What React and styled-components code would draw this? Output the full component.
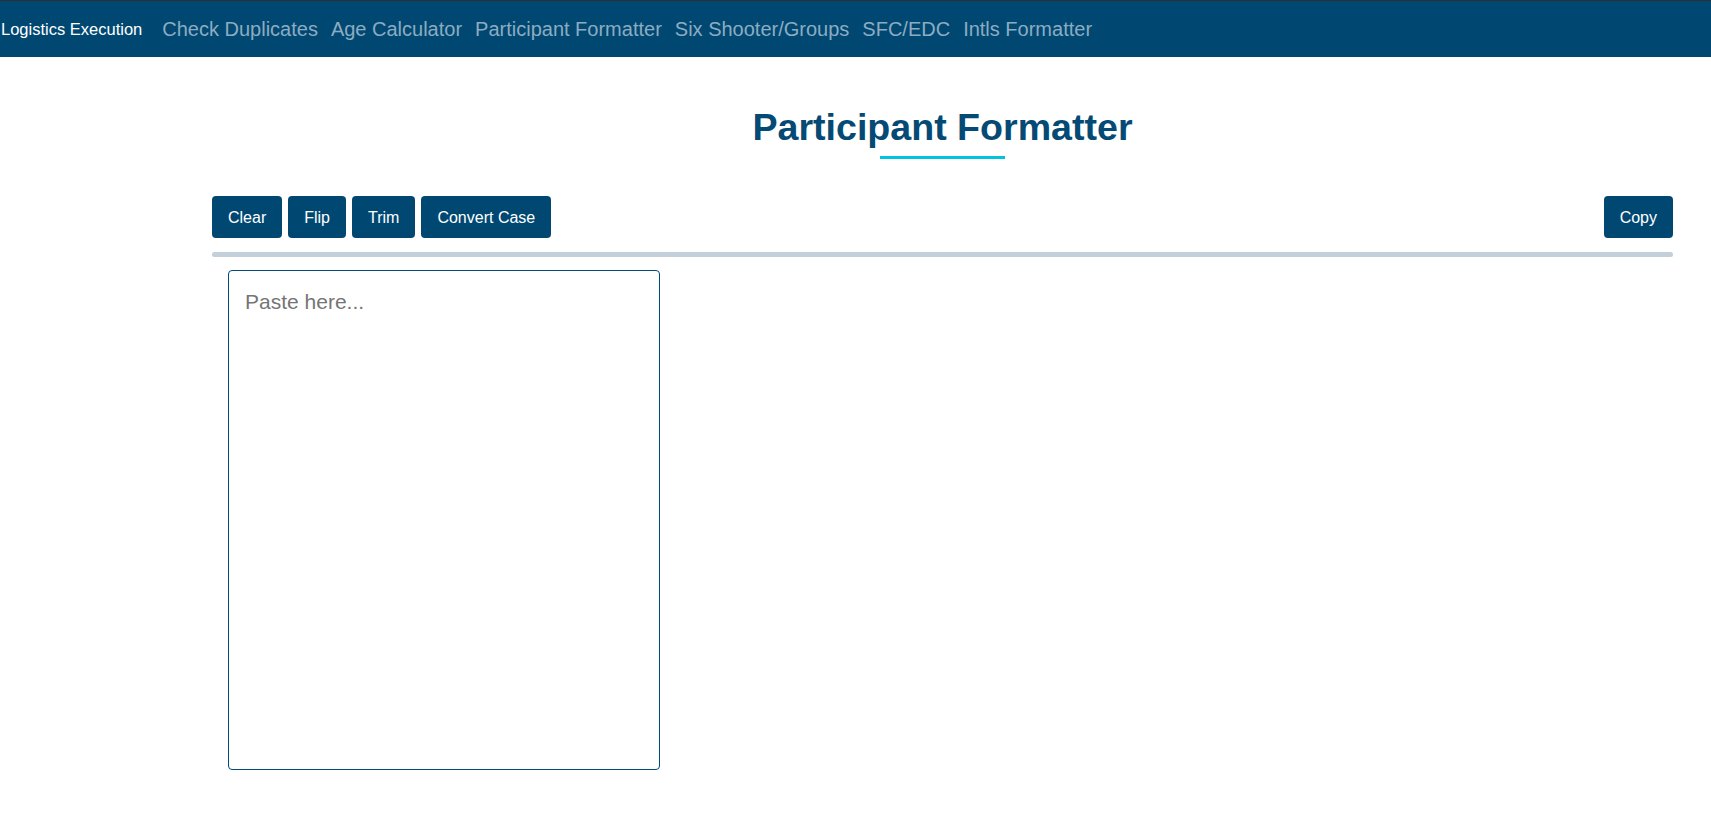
import React, { useState } from "react";
import styled, { createGlobalStyle } from "styled-components";

const GlobalStyle = createGlobalStyle`
  html, body { margin: 0; padding: 0; background: #ffffff; }
  body { font-family: "Liberation Sans", Arial, sans-serif; }
  * { box-sizing: border-box; }
`;

const NavBar = styled.nav`
  display: flex;
  align-items: center;
  height: 57px;
  border-top: 1px solid #2f2f2f;
  background: #004872;
  padding-left: 1px;
`;

const Brand = styled.span`
  font-size: 16.5px;
  color: #ffffff;
  margin-right: 20px;
  padding-top: 1px;
`;

const NavLinks = styled.div`
  display: flex;
  align-items: center;
  gap: 13px;
  padding-top: 1px;
`;

const NavLink = styled.a`
  font-size: 20px;
  color: #8cacc1;
  text-decoration: none;
  cursor: pointer;
`;

const Main = styled.main`
  padding: 0 38px 0 212px;
`;

const TitleBlock = styled.header`
  display: flex;
  flex-direction: column;
  align-items: center;
  padding-top: 49px;
`;

const Title = styled.h1`
  margin: 0;
  font-size: 37.6px;
  line-height: 43px;
  font-weight: bold;
  color: #044a75;
`;

const Underline = styled.div`
  width: 125px;
  height: 3px;
  margin-top: 7px;
  background: #00c3df;
`;

const Toolbar = styled.div`
  display: flex;
  justify-content: space-between;
  align-items: center;
  margin-top: 37px;
`;

const ButtonGroup = styled.div`
  display: flex;
  gap: 6px;
`;

const ActionButton = styled.button`
  font-family: "Liberation Sans", Arial, sans-serif;
  font-size: 16px;
  line-height: 18px;
  padding: 13px 16px 11px;
  border: none;
  border-radius: 4px;
  background: #004872;
  color: #ffffff;
  cursor: pointer;
`;

const Separator = styled.div`
  height: 5px;
  margin-top: 14px;
  border-radius: 3px;
  background: #c3cfd9;
`;

const PasteArea = styled.textarea`
  display: block;
  width: 432px;
  height: 500px;
  margin: 13px 0 0 16px;
  padding: 16px;
  border: 1px solid #024a77;
  border-radius: 4px;
  font-family: "Liberation Sans", Arial, sans-serif;
  font-size: 21px;
  line-height: 1.4;
  color: #222;
  resize: none;
  outline: none;
  &::placeholder { color: #757575; }
`;

const links = [
  "Check Duplicates",
  "Age Calculator",
  "Participant Formatter",
  "Six Shooter/Groups",
  "SFC/EDC",
  "Intls Formatter",
];

export default function App() {
  const [text, setText] = useState("");
  return (
    <>
      <GlobalStyle />
      <NavBar>
        <Brand>Logistics Execution</Brand>
        <NavLinks>
          {links.map((l) => (
            <NavLink key={l}>{l}</NavLink>
          ))}
        </NavLinks>
      </NavBar>
      <Main>
        <TitleBlock>
          <Title>Participant Formatter</Title>
          <Underline />
        </TitleBlock>
        <Toolbar>
          <ButtonGroup>
            <ActionButton onClick={() => setText("")}>Clear</ActionButton>
            <ActionButton>Flip</ActionButton>
            <ActionButton>Trim</ActionButton>
            <ActionButton>Convert Case</ActionButton>
          </ButtonGroup>
          <ActionButton>Copy</ActionButton>
        </Toolbar>
        <Separator />
        <PasteArea
          placeholder="Paste here..."
          value={text}
          onChange={(e) => setText(e.target.value)}
        />
      </Main>
    </>
  );
}
